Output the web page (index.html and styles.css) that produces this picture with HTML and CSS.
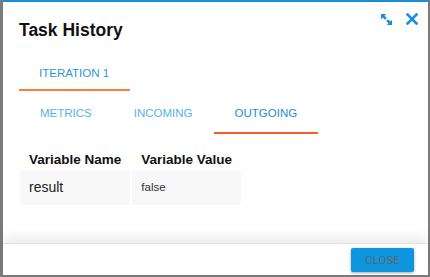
FILE: index.html
```html
<!DOCTYPE html>
<html lang="en">
<head>
    <meta charset="UTF-8">
    <meta name="viewport" content="width=device-width, initial-scale=1.0">
    <title>Task History</title>
    <link rel="stylesheet" href="styles.css">
</head>
<body>

<div class="backdrop">
    <div class="modal">
        <div class="modal-header">
            <h2 class="title">Task History</h2>
            <div class="header-icons">
                <svg class="icon" width="11" height="11" viewBox="0 0 11 11">
                    <path d="M0 0h5.2L3.5 1.7 5.8 4 4 5.8 1.7 3.5 0 5.2z" fill="#1a8fd8"/>
                    <path d="M11 11H5.8l1.7-1.7L5.2 7 7 5.2l2.3 2.3L11 5.8z" fill="#1a8fd8"/>
                </svg>
                <svg class="icon" width="12" height="12" viewBox="0 0 12 12">
                    <path d="M1.5 1.5l9 9M10.5 1.5l-9 9" stroke="#1a8fd8" stroke-width="2.6" stroke-linecap="square"/>
                </svg>
            </div>
        </div>

        <div class="modal-body">
            <div class="tabs iterations">
                <div class="tab active">ITERATION 1</div>
            </div>

            <div class="tabs sections">
                <div class="tab">METRICS</div>
                <div class="tab">INCOMING</div>
                <div class="tab active">OUTGOING</div>
            </div>

            <table class="vars">
                <thead>
                    <tr>
                        <th class="name">Variable Name</th>
                        <th class="value">Variable Value</th>
                    </tr>
                </thead>
                <tbody>
                    <tr>
                        <td class="name">result</td>
                        <td class="value">false</td>
                    </tr>
                </tbody>
            </table>
        </div>

        <div class="modal-footer">
            <button class="close-btn">CLOSE</button>
        </div>
    </div>
</div>

</body>
</html>
```

FILE: styles.css
```css
* {
    box-sizing: border-box;
}

body {
    margin: 0;
    font-family: "Liberation Sans", Arial, sans-serif;
    background-color: #7b7b7b;
}

.backdrop {
    width: 430px;
    height: 277px;
    padding: 0 2px 2px 3px;
    background-color: #7b7b7b;
}

.modal {
    height: 100%;
    display: flex;
    flex-direction: column;
    background-color: #fff;
    border-top: 2px solid #1a8fd8;
}

.modal-header {
    display: flex;
    justify-content: space-between;
    align-items: flex-start;
    padding: 18px 10px 0 16px;
}

.title {
    margin: 0;
    font-size: 17.5px;
    line-height: 20px;
    font-weight: bold;
    color: #111;
}

.header-icons {
    display: flex;
    align-items: center;
    gap: 14px;
    margin-top: -7px;
}

.icon {
    display: block;
}

.modal-body {
    flex: 1;
    padding: 0 0 0 16px;
}

.tabs {
    display: flex;
}

.tab {
    font-size: 11.5px;
    line-height: 14px;
    color: #56b3ea;
    border-bottom: 2px solid transparent;
}

.iterations {
    margin-top: 26px;
}

.iterations .tab {
    padding: 0 21px 9px 20px;
    color: #2a97dc;
}

.iterations .tab.active {
    border-bottom-color: #ff7a3f;
}

.sections {
    margin-top: 15px;
}

.sections .tab {
    padding: 0 21px 12px;
}

.sections .tab.active {
    color: #1e8ad6;
    border-bottom-color: #ff5a24;
}

.vars {
    margin: 13px 0 0 -1px;
    border-spacing: 2px;
    text-align: left;
    white-space: nowrap;
}

.vars .name {
    width: 110px;
}

.vars .value {
    width: 108px;
}

.vars th {
    padding: 3px 9px 0;
    font-size: 13.5px;
    line-height: 16px;
    color: #111;
}

.vars td {
    padding: 9px 9px;
    line-height: 17px;
    background-color: #f8f8f8;
    color: #222;
}

.vars td.name {
    font-size: 14px;
}

.vars td.value {
    font-size: 11.5px;
    color: #333;
}

.modal-footer {
    height: 32px;
    display: flex;
    justify-content: flex-end;
    align-items: center;
    padding-right: 14px;
    border-top: 1px solid #e2e2e2;
    box-shadow: 0 -6px 12px rgba(0, 0, 0, 0.08);
}

.close-btn {
    width: 63px;
    height: 24px;
    padding: 0;
    border: none;
    border-radius: 2px;
    background-color: #0e95e0;
    color: #5f6870;
    font-family: Roboto, sans-serif;
    font-size: 11.5px;
    box-shadow: 0 1px 3px rgba(0, 0, 0, 0.35);
    cursor: pointer;
}
```
